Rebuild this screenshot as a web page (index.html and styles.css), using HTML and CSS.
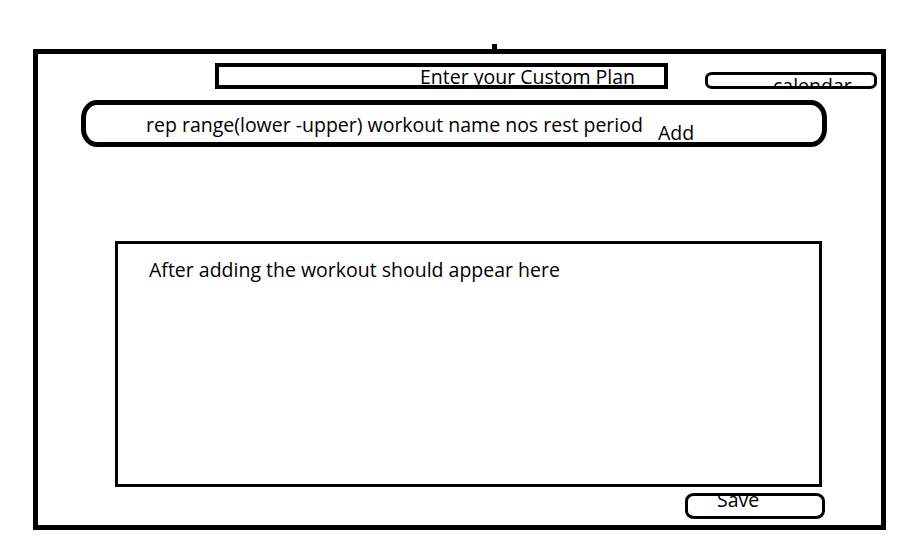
FILE: index.html
```html
<!DOCTYPE html>
<html lang="en">
<head>
<meta charset="utf-8">
<title>Custom Plan</title>
<link rel="stylesheet" href="styles.css">
</head>
<body>
<div class="frame">
  <div class="top-row">
    <div class="title-box"><span class="title-text">Enter your Custom Plan</span></div>
    <div class="calendar-pill"><span class="calendar-text">calendar</span></div>
  </div>
  <div class="entry-oval">
    <span class="entry-text">rep range(lower -upper) workout name nos rest period</span>
    <span class="add-text">Add</span>
  </div>
  <div class="list-box">
    <span class="list-text">After adding the workout should appear here</span>
  </div>
  <div class="save-pill"><span class="save-text">Save</span></div>
</div>
</body>
</html>
```

FILE: styles.css
```css
* { box-sizing: border-box; }

html, body {
  margin: 0;
  padding: 0;
  background: #fff;
}

body {
  width: 918px;
  height: 542px;
  overflow: hidden;
  font-family: "Open Sans", "Noto Sans", sans-serif;
  font-size: 19.5px;
  line-height: 20px;
  color: #000;
  padding-top: 49px;
  padding-left: 33px;
}

.frame {
  position: relative;
  width: 853px;
  height: 481px;
  border: 5px solid #000;
  display: flex;
  flex-direction: column;
  align-items: flex-start;
}

.frame::before {
  content: "";
  position: absolute;
  left: 454px;
  top: -10px;
  width: 5px;
  height: 6px;
  background: #000;
}

.top-row {
  display: flex;
  align-items: flex-start;
  margin-left: 177px;
}

.title-box {
  margin-top: 9px;
  width: 453px;
  height: 26px;
  border: 4px solid #000;
  padding-left: 201px;
  white-space: nowrap;
}

.title-text {
  display: block;
  margin-top: 0;
}

.calendar-pill {
  margin-top: 18px;
  margin-left: 37px;
  width: 172px;
  height: 17px;
  border: 3px solid #000;
  border-radius: 7px / 6px;
  padding-left: 65px;
  overflow: hidden;
  white-space: nowrap;
}

.calendar-text {
  display: block;
  margin-top: 1px;
}

.entry-oval {
  margin-top: 11px;
  margin-left: 43px;
  width: 746px;
  height: 47px;
  border: 5px solid #000;
  border-radius: 16px / 18px;
  display: flex;
  align-items: flex-start;
  padding-left: 60px;
  white-space: nowrap;
}

.entry-text {
  margin-top: 10px;
}

.add-text {
  margin-top: 18px;
  margin-left: 15px;
}

.list-box {
  margin-top: 94px;
  margin-left: 77px;
  width: 707px;
  height: 246px;
  border: 3px solid #000;
  padding-top: 16px;
  padding-left: 31px;
}

.save-pill {
  margin-top: 6px;
  margin-left: 647px;
  width: 140px;
  height: 26px;
  border: 3px solid #000;
  border-radius: 9px / 8px;
  padding-left: 29px;
}

.save-text {
  display: block;
  margin-top: -6px;
}
```
